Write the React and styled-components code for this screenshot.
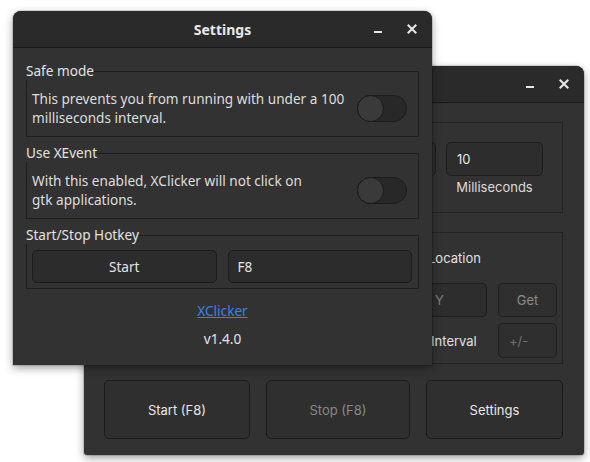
import React from 'react';
import styled, { createGlobalStyle } from 'styled-components';

const Global = createGlobalStyle`
  html, body {
    margin: 0;
    padding: 0;
    background: #ffffff;
  }
  * {
    box-sizing: border-box;
  }
`;

const Desktop = styled.div`
  position: relative;
  width: 590px;
  height: 462px;
  overflow: hidden;
  background: #ffffff;
`;

const Window = styled.div`
  position: absolute;
  left: ${p => p.$x}px;
  top: ${p => p.$y}px;
  width: ${p => p.$w}px;
  height: ${p => p.$h}px;
  display: flex;
  flex-direction: column;
  background: #323232;
  border-radius: 8px 8px ${p => p.$bottomRadius}px ${p => p.$bottomRadius}px;
  box-shadow: 0 3px 9px rgba(0, 0, 0, 0.38), 0 0 0 1px rgba(0, 0, 0, 0.12);
  overflow: hidden;
`;

const TitleBar = styled.div`
  position: relative;
  height: ${p => p.$h}px;
  flex: none;
  display: flex;
  align-items: center;
  justify-content: center;
  background: #2a2a2a;
  border-bottom: 1px solid #1a1a1a;
  font-family: "Noto Sans", "DejaVu Sans", sans-serif;
  font-weight: 700;
  font-size: 14px;
  color: #e8e8e8;
`;

const TitleButtons = styled.div`
  position: absolute;
  right: 12px;
  top: 0;
  bottom: 0;
  display: flex;
  align-items: center;
  gap: 18px;
`;

const TitleButton = styled.div`
  width: 16px;
  height: 16px;
  display: flex;
  align-items: center;
  justify-content: center;
`;

const Minimize = () => (
  <TitleButton>
    <svg width="16" height="16" viewBox="0 0 16 16">
      <rect x="4" y="10" width="8" height="2" fill="#e6e6e6" />
    </svg>
  </TitleButton>
);

const Close = () => (
  <TitleButton>
    <svg width="16" height="16" viewBox="0 0 16 16">
      <path d="M4.5 4.5 L11.5 11.5 M11.5 4.5 L4.5 11.5" stroke="#e6e6e6" strokeWidth="2.1" strokeLinecap="square" />
    </svg>
  </TitleButton>
);

/* ---------- main XClicker window ---------- */

const MainBody = styled.div`
  flex: 1;
  display: flex;
  flex-direction: column;
  padding: 19px 21px 17px 20px;
  font-family: Inter, "Liberation Sans", sans-serif;
  font-size: 13px;
  color: #e4e4e4;
`;

const Group = styled.div`
  border: 1px solid #232323;
  margin-bottom: ${p => p.$mb}px;
`;

const IntervalGroup = styled(Group)`
  display: grid;
  grid-template-columns: repeat(4, 97px);
  column-gap: 10px;
  padding: 19px 19px 16px 20px;
`;

const Field = styled.div`
  display: flex;
  flex-direction: column;
  align-items: center;
`;

const Input = styled.div`
  width: 100%;
  height: ${p => p.$h || 34}px;
  display: flex;
  align-items: center;
  padding: 0 10px;
  background: #2d2d2d;
  border: 1px solid #1e1e1e;
  border-radius: 5px;
  color: ${p => (p.$placeholder ? '#7c7c7c' : '#e8e8e8')};
`;

const FieldLabel = styled.div`
  margin-top: 2px;
  height: 18px;
  line-height: 18px;
  color: #dcdcdc;
`;

const OptionsGroup = styled(Group)`
  display: flex;
  flex-direction: column;
  padding: 12px 5px 5px 10px;
`;

const OptionRow = styled.div`
  display: grid;
  grid-template-columns: ${p => p.$cols || '1fr 132px 59px'};
  column-gap: 11px;
  align-items: center;
  height: ${p => p.$h}px;
  margin-top: ${p => p.$mt || 0}px;
`;

const Check = styled.div`
  display: flex;
  align-items: center;
  gap: 6px;
  color: #e0e0e0;
`;

const CheckBox = styled.span`
  width: 16px;
  height: 16px;
  border: 1px solid #1e1e1e;
  border-radius: 3px;
  background: #2d2d2d;
`;

const SmallButton = styled.div`
  height: ${p => p.$h}px;
  display: flex;
  align-items: center;
  justify-content: ${p => (p.$left ? 'flex-start' : 'center')};
  padding: 0 10px;
  background: #2f2f2f;
  border: 1px solid #1e1e1e;
  border-radius: 5px;
  color: ${p => p.$color || '#8a8a8a'};
`;

const ActionRow = styled.div`
  display: grid;
  grid-template-columns: 146px 144px 1fr;
  column-gap: 16px;
  height: 59px;
`;

const ActionButton = styled.div`
  display: flex;
  align-items: center;
  justify-content: center;
  background: #2f2f2f;
  border: 1px solid #1b1b1b;
  border-radius: 5px;
  color: ${p => (p.$disabled ? '#888888' : '#e8e8e8')};
`;

/* ---------- settings window ---------- */

const SettingsBody = styled.div`
  flex: 1;
  display: flex;
  flex-direction: column;
  padding: 14px 13px 0 13px;
  font-family: "Noto Sans", "DejaVu Sans", sans-serif;
  font-size: 13.6px;
  color: #dedede;
`;

const Frame = styled.div`
  display: flex;
  flex-direction: column;
  margin-bottom: 7px;
`;

const FrameHead = styled.div`
  display: flex;
  height: 18px;
  line-height: 18px;
`;

const Legend = styled.span`
  color: #e2e2e2;
`;

const Rule = styled.span`
  flex: 1;
  align-self: flex-end;
  height: 9px;
  border-top: 1px solid #1e1e1e;
  border-right: 1px solid #1e1e1e;
`;

const FrameBody = styled.div`
  display: flex;
  align-items: center;
  gap: ${p => p.$gap || 0}px;
  height: ${p => p.$h}px;
  padding: ${p => p.$pad};
  border: 1px solid #1e1e1e;
  border-top: none;
`;

const Description = styled.div`
  flex: 1;
  line-height: 19px;
`;

const Toggle = styled.div`
  position: relative;
  width: 50px;
  height: 27px;
  flex: none;
  border-radius: 14px;
  background: #282828;
  border: 1px solid #1c1c1c;
`;

const Knob = styled.span`
  position: absolute;
  left: -1px;
  top: -1px;
  width: 27px;
  height: 27px;
  border-radius: 50%;
  background: #3a3a3a;
  border: 1px solid #1a1a1a;
`;

const HotkeyButton = styled.div`
  flex: 1;
  height: 33px;
  display: flex;
  align-items: center;
  justify-content: ${p => (p.$entry ? 'flex-start' : 'center')};
  padding: 0 9px;
  background: #2c2c2c;
  border: 1px solid #1b1b1b;
  border-radius: 5px;
  color: #e4e4e4;
`;

const About = styled.div`
  display: flex;
  flex-direction: column;
  align-items: center;
  margin-top: 6px;
  gap: 10px;
`;

const Link = styled.a`
  line-height: 18px;
  color: #3584e4;
  text-decoration: underline;
`;

const Version = styled.div`
  line-height: 18px;
  color: #e4e4e4;
`;

const SettingsFrame = ({ title, children, h, pad, gap }) => (
  <Frame>
    <FrameHead>
      <Legend>{title}</Legend>
      <Rule />
    </FrameHead>
    <FrameBody $h={h} $pad={pad} $gap={gap}>
      {children}
    </FrameBody>
  </Frame>
);

const Switch = () => (
  <Toggle>
    <Knob />
  </Toggle>
);

const intervals = [
  { label: 'Hours', value: '0' },
  { label: 'Minutes', value: '0' },
  { label: 'Seconds', value: '0' },
  { label: 'Milliseconds', value: '10' },
];

export default function App() {
  return (
    <Desktop>
      <Global />

      <Window $x={84} $y={66} $w={500} $h={389} $bottomRadius={3}>
        <TitleBar $h={37}>
          XClicker
          <TitleButtons>
            <Minimize />
            <Close />
          </TitleButtons>
        </TitleBar>
        <MainBody>
          <IntervalGroup $mb={19}>
            {intervals.map(f => (
              <Field key={f.label}>
                <Input>{f.value}</Input>
                <FieldLabel>{f.label}</FieldLabel>
              </Field>
            ))}
          </IntervalGroup>

          <OptionsGroup $mb={16}>
            <OptionRow $h={26}>
              <span />
              <Check>
                <CheckBox />
                Custom Location
              </Check>
              <span />
            </OptionRow>
            <OptionRow $h={34} $mt={12} $cols="1fr 63px 63px 59px">
              <span />
              <Input $placeholder>X</Input>
              <Input $placeholder>Y</Input>
              <SmallButton $h={34}>Get</SmallButton>
            </OptionRow>
            <OptionRow $h={35} $mt={6}>
              <span />
              <Check>
                <CheckBox />
                Random Interval
              </Check>
              <SmallButton $h={35} $left $color="#6f6f6f">+/-</SmallButton>
            </OptionRow>
          </OptionsGroup>

          <ActionRow>
            <ActionButton>Start (F8)</ActionButton>
            <ActionButton $disabled>Stop (F8)</ActionButton>
            <ActionButton>Settings</ActionButton>
          </ActionRow>
        </MainBody>
      </Window>

      <Window $x={13} $y={11} $w={419} $h={354} $bottomRadius={0}>
        <TitleBar $h={37}>
          Settings
          <TitleButtons>
            <Minimize />
            <Close />
          </TitleButtons>
        </TitleBar>
        <SettingsBody>
          <SettingsFrame title="Safe mode" h={57} pad="0 11px 0 5px">
            <Description>
              This prevents you from running with under a 100
              <br />
              milliseconds interval.
            </Description>
            <Switch />
          </SettingsFrame>

          <SettingsFrame title="Use XEvent" h={57} pad="0 11px 0 5px">
            <Description>
              With this enabled, XClicker will not click on
              <br />
              gtk applications.
            </Description>
            <Switch />
          </SettingsFrame>

          <SettingsFrame title="Start/Stop Hotkey" h={45} pad="0 6px 0 5px" gap={11}>
            <HotkeyButton>Start</HotkeyButton>
            <HotkeyButton $entry>F8</HotkeyButton>
          </SettingsFrame>

          <About>
            <Link href="#">XClicker</Link>
            <Version>v1.4.0</Version>
          </About>
        </SettingsBody>
      </Window>
    </Desktop>
  );
}
